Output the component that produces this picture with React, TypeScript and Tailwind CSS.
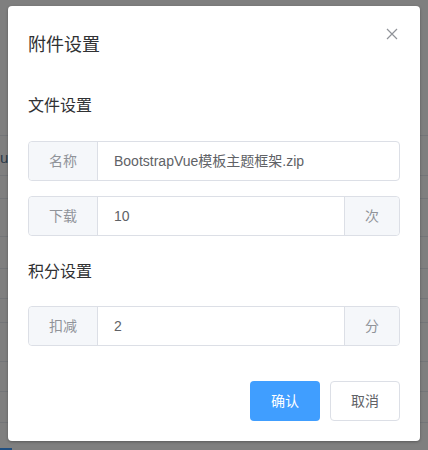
import React from 'react';

const rows = [136, 40, 23, 38, 32, 30, 24, 39, 30, 31];

const InputGroup: React.FC<{ label: string; value: string; suffix?: string }> = ({ label, value, suffix }) => (
  <div className="flex h-10 rounded border border-[#dcdfe6] text-sm">
    <div className="flex w-[69px] shrink-0 items-center justify-center rounded-l bg-[#f5f7fa] text-[#909399] border-r border-[#dcdfe6]">
      {label}
    </div>
    <div className="flex flex-1 items-center px-4 text-[#606266]">{value}</div>
    {suffix && (
      <div className="flex w-[55px] shrink-0 items-center justify-center rounded-r bg-[#f5f7fa] text-[#909399] border-l border-[#dcdfe6]">
        {suffix}
      </div>
    )}
  </div>
);

export default function App() {
  return (
    <div
      className="relative h-[450px] w-[428px] overflow-hidden bg-[#7f7f7f]"
      style={{ fontFamily: '"Liberation Sans", "Noto Sans CJK SC", sans-serif' }}
    >
      {/* page under the overlay */}
      <div className="flex flex-col">
        {rows.map((h, i) => (
          <div key={i} className="border-b border-[#737578]" style={{ height: h }} />
        ))}
      </div>
      <div className="absolute left-0 top-[147px] text-[15px] text-[#2b3a4a]">u</div>
      <div className="absolute bottom-0 left-0 h-[2px] w-3 bg-[#1f4e80]" />

      {/* dialog */}
      <div className="absolute left-2 top-[6px] h-[435px] w-[412px] rounded-sm bg-white px-5 shadow-[0_1px_3px_rgba(0,0,0,0.3)]">
        <div className="flex items-center justify-between pt-[27px]">
          <h3 className="text-lg font-normal leading-6 text-[#303133]">附件设置</h3>
          <svg width="12" height="12" viewBox="0 0 12 12" className="-mt-[23px] mr-[2px]">
            <path d="M1 1L11 11M11 1L1 11" stroke="#909399" strokeWidth="1.2" />
          </svg>
        </div>

        <div className="mt-[37px] text-base leading-6 text-[#303133]">文件设置</div>
        <div className="mt-[23px] space-y-[15px]">
          <InputGroup label="名称" value="BootstrapVue模板主题框架.zip" />
          <InputGroup label="下载" value="10" suffix="次" />
        </div>

        <div className="mt-[24px] text-base leading-6 text-[#303133]">积分设置</div>
        <div className="mt-[22px]">
          <InputGroup label="扣减" value="2" suffix="分" />
        </div>

        <div className="mt-[35px] flex justify-end gap-[10px] text-sm">
          <button className="h-10 w-[70px] rounded bg-[#409eff] text-white">确认</button>
          <button className="h-10 w-[70px] rounded border border-[#dcdfe6] bg-white text-[#606266]">取消</button>
        </div>
      </div>
    </div>
  );
}
